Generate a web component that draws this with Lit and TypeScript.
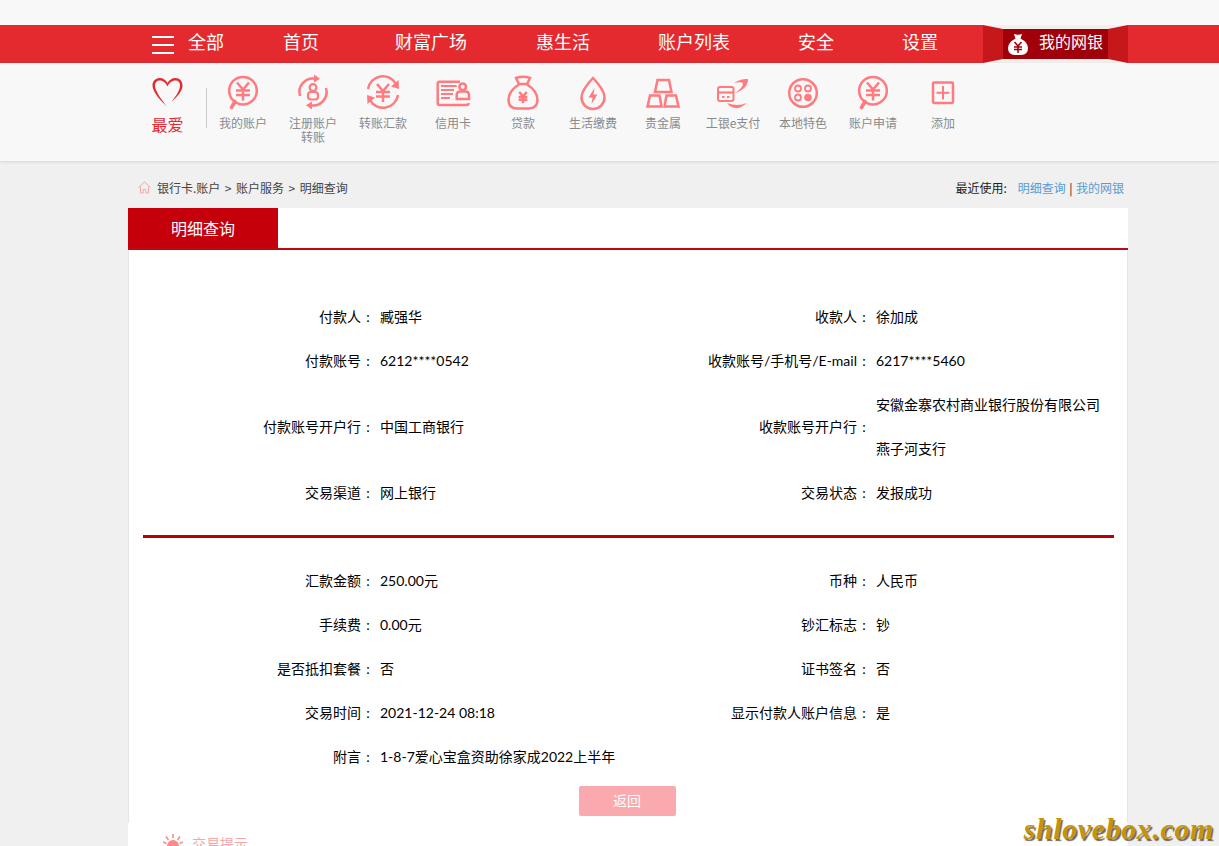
import { LitElement, html, css, svg } from "lit";
import { customElement } from "lit/decorators.js";

const yen = (cx: number, cy: number, s = 1) => svg`
  <path d="M${cx - 6 * s} ${cy - 8 * s}L${cx} ${cy - 1 * s}L${cx + 6 * s} ${cy - 8 * s}M${cx - 7 * s} ${cy}H${cx + 7 * s}M${cx - 7 * s} ${cy + 4.5 * s}H${cx + 7 * s}M${cx} ${cy - 1 * s}V${cy + 10 * s}" />`;

const bubble = svg`
  <circle cx="20" cy="18.700" r="13.800" />
  <path d="M12 29.500L8.500 35.500" stroke-width="3.600" stroke-linecap="round" />
  ${yen(20, 18.5)}`;

const icons: Record<string, unknown> = {
  account: bubble,
  register: svg`
    <path d="M7 24A13.500 13.500 0 0 1 22 6.700" /><path d="M21 2.500L27 6.800L21 10.500Z" fill="#ff7b7f" stroke="none" />
    <path d="M33 16A13.500 13.500 0 0 1 18 33.300" /><path d="M19 37.500L13 33.200L19 29.500Z" fill="#ff7b7f" stroke="none" />
    <circle cx="20" cy="15.500" r="3.400" stroke-width="2.200" />
    <rect x="15" y="20" width="10" height="7.500" rx="3" stroke-width="2.200" />`,
  transfer: svg`
    <path d="M5 17A15 15 0 0 1 33 12" /><path d="M35.500 8L36 17L28 14.500Z" fill="#ff7b7f" stroke="none" />
    <path d="M35 23A15 15 0 0 1 7 28" /><path d="M4.500 32L4 23L12 25.500Z" fill="#ff7b7f" stroke="none" />
    ${yen(20, 20)}`,
  card: svg`
    <path d="M27 9.700H6.700Q4.700 9.700 4.700 11.700V31Q4.700 33 6.700 33H34Q35.500 33 35.500 31" />
    <path d="M8 14H23.700M8 18H21M8 22H20M8 26H17" stroke-width="1.800" />
    <circle cx="29.700" cy="14.700" r="3.300" />
    <path d="M23.700 27V23Q23.700 19.500 27 19.500H32.500Q36 19.500 36 23V27Z" />`,
  loan: svg`
    <path d="M13 6Q20 3.500 27 6L24 12H16Z" />
    <path d="M16 12.500Q5.500 19 5.500 28Q5.500 36 14 36.500H26Q34.500 36 34.500 28Q34.500 19 24 12.500" />
    ${yen(20, 25, 0.62)}`,
  water: svg`
    <path d="M20 6Q8.500 18 8.500 25.500A11.500 11.500 0 0 0 31.500 25.500Q31.500 18 20 6Z" />
    <path d="M21.500 16L15.500 25.500H19.500L18.500 32L24.500 22.500H20.500Z" fill="#ff7b7f" stroke="none" />`,
  gold: svg`
    <path d="M14.500 8H26L28.500 20H12Z" />
    <path d="M7 23.500H16.500L18.500 34.500H4.500Z" />
    <path d="M23.500 23.500H33L35.500 34.500H21.500Z" />`,
  pay: svg`
    <rect x="5" y="15" width="15.500" height="14" rx="2" stroke-width="2" />
    <path d="M5 20.500H20.500" stroke-width="2.200" />
    <path d="M9 25H11.500M14 25H16.500" stroke-width="1.800" />
    <path d="M21 11Q28 6.500 35 7Q35 13 30 17Q26 20 22 21Q30 16 30 11Q27 9.500 21 11Z" fill="#ff7b7f" stroke="none" />
    <path d="M14 31Q25 35 33.500 31Q27 38 20 35.500Q16 34 14 31Z" fill="#ff7b7f" stroke="none" />`,
  local: svg`
    <circle cx="20" cy="21" r="13.800" />
    <circle cx="15" cy="16.500" r="3" stroke-width="1.800" />
    <circle cx="25" cy="16.500" r="3" stroke-width="1.800" />
    <circle cx="15" cy="25.500" r="3" stroke-width="1.800" />
    <circle cx="25" cy="25.500" r="3.800" fill="#ff7b7f" stroke="none" />`,
  apply: bubble,
  add: svg`
    <rect x="10" y="10.500" width="20" height="20.500" rx="1.200" />
    <path d="M20 14V27.500M13.500 20.700H26.500" stroke-width="2" />`,
};

const tools = [
  { icon: "account", label: "我的账户" },
  { icon: "register", label: "注册账户转账" },
  { icon: "transfer", label: "转账汇款" },
  { icon: "card", label: "信用卡" },
  { icon: "loan", label: "贷款" },
  { icon: "water", label: "生活缴费" },
  { icon: "gold", label: "贵金属" },
  { icon: "pay", label: "工银e支付" },
  { icon: "local", label: "本地特色" },
  { icon: "apply", label: "账户申请" },
  { icon: "add", label: "添加" },
];

const navs = [
  { t: "首页", gap: 59 },
  { t: "财富广场", gap: 76 },
  { t: "惠生活", gap: 69 },
  { t: "账户列表", gap: 68 },
  { t: "安全", gap: 68 },
  { t: "设置", gap: 68 },
];

const upper = [
  ["付款人", "臧强华", "收款人", "徐加成"],
  ["付款账号", "6212****0542", "收款账号/手机号/E-mail", "6217****5460"],
  ["付款账号开户行", "中国工商银行", "收款账号开户行", "安徽金寨农村商业银行股份有限公司|燕子河支行"],
  ["交易渠道", "网上银行", "交易状态", "发报成功"],
];
const lower = [
  ["汇款金额", "250.00元", "币种", "人民币"],
  ["手续费", "0.00元", "钞汇标志", "钞"],
  ["是否抵扣套餐", "否", "证书签名", "否"],
  ["交易时间", "2021-12-24 08:18", "显示付款人账户信息", "是"],
  ["附言", "1-8-7爱心宝盒资助徐家成2022上半年", "", ""],
];

@customElement("app-root")
export class AppRoot extends LitElement {
  static styles = css`
    :host {
      display: block;
      position: relative;
      height: 846px;
      overflow: hidden;
      background: #f0f0f0;
      font-family: "Noto Sans CJK SC", "Liberation Sans", sans-serif;
      color: #000;
    }
    .strip { height: 25px; background: #f8f8f8; }
    .nav { height: 38px; background: #e42a2f; }
    .wrap { width: 1000px; margin-left: 128px; }
    .nav .wrap { display: flex; align-items: center; height: 38px; color: #fff; font-size: 18px; }
    .burger { display: flex; flex-direction: column; justify-content: space-between; width: 22px; height: 18px; margin: 2px 14px 0 24px; }
    .burger i { display: block; height: 2px; background: #fff; }
    .navitem { white-space: nowrap; line-height: 38px; margin-top: -7px; }
    .mine { margin-left: auto; width: 145px; height: 38px; flex: none; background: #f2efed; display: flex; }
    .rib { width: 20px; height: 38px; flex: none; }
    .mine-mid { flex: 1; height: 30px; margin-top: 4px; background: #a0000a; display: flex; align-items: center; font-size: 16px; padding-left: 5px; gap: 11px; }
    .mine-mid svg { flex: none; }
    .mine-mid span { margin-bottom: 6px; }
    .tools { height: 98px; background: #f8f8f8; box-shadow: 0 1px 3px rgba(0, 0, 0, 0.12); position: relative; }
    .tools .wrap { display: flex; height: 98px; }
    .fav { width: 79px; flex: none; position: relative; padding-top: 14px; box-sizing: border-box; margin-right: 1px; }
    .fav-in { width: 79px; text-align: center; color: #e42a2f; font-size: 16px; line-height: 20px; }
    .fav-in svg { display: block; margin: 0 auto 7px; }
    .sep { position: absolute; right: 0; top: 25px; width: 1px; height: 40px; background: #ccc; }
    .tool { width: 70px; flex: none; text-align: center; font-size: 12px; line-height: 14px; color: #8a8a8a; padding-top: 9px; box-sizing: border-box; }
    .tool svg { display: block; margin: 0 auto 4px; fill: none; stroke: #ff7b7f; stroke-width: 2.5; }
    .tool span { display: block; width: 56px; margin: 0 auto; }
    .crumbs { height: 47px; display: flex; align-items: center; justify-content: space-between; font-size: 12px; color: #444; padding: 6px 4px 0 10px; box-sizing: border-box; }
    .crumbs .l { display: flex; align-items: center; gap: 6px; }
    .crumbs .sepc { margin: 0 4.500px; }
    .crumbs .r { color: #222; }
    .crumbs a { color: #5a9bd0; text-decoration: none; }
    .crumbs .lbl { margin-right: 11px; }
    .crumbs .bar { margin: 0 3.500px; }
    .tabbar { height: 42px; background: #fff; border-bottom: 2px solid #bd0a12; box-sizing: border-box; }
    .tab { width: 150px; height: 40px; background: #c6000b; color: #fff; font-size: 16px; line-height: 40px; text-align: center; }
    .card { background: #fff; border-left: 1px solid #e6e6e6; border-right: 1px solid #e6e6e6; height: 573px; box-sizing: border-box; padding: 45px 13px 0 14px; font-size: 14px; font-family: "Lato", "Noto Sans CJK SC", sans-serif; }
    .row { display: grid; grid-template-columns: 232px 264px 232px 1fr; line-height: 44px; align-items: center; }
    .row .k { display: flex; justify-content: flex-end; white-space: nowrap; }
    .row .c { width: 14px; text-align: center; }
    .row .v { padding-left: 5px; white-space: nowrap; }
    hr { border: 0; height: 3px; background: #b9000a; margin: 20px 0 21px; }
    .btn-row { display: flex; justify-content: center; padding: 7px 3px 0 0; }
    .btn { width: 97px; height: 30px; background: #faa9ae; color: #fff; font-size: 14px; border-radius: 2px; text-align: center; line-height: 30px; }
    .foot { background: #fff; height: 30px; display: flex; align-items: flex-start; gap: 9px; padding: 10px 0 0 35px; color: #f7a6a8; font-size: 14px; line-height: 20px; box-sizing: border-box; }
    .mark { position: absolute; right: 5px; bottom: 2px; font-family: "Liberation Serif", serif; font-style: italic; font-weight: 700; font-size: 30px; line-height: 30px; letter-spacing: 0.6px; color: #c6940c; text-shadow: 1.500px 1.500px 1px #666; }
  `;

  private rows(list: string[][]) {
    const key = (t: string) => html`<div class="k">${t}${t ? html`<span class="c">:</span>` : ""}</div>`;
    return list.map(
      (r) => html`<div class="row">
        ${key(r[0])}
        <div class="v">${r[1]}</div>
        ${key(r[2])}
        <div class="v">${r[3].split("|").map((p, i) => (i ? html`<br />${p}` : p))}</div>
      </div>`
    );
  }

  render() {
    return html`
      <div class="strip"></div>
      <div class="nav">
        <div class="wrap">
          <div class="burger"><i></i><i></i><i></i></div>
          <div class="navitem">全部</div>
          ${navs.map((n) => html`<div class="navitem" style="margin-left:${n.gap}px">${n.t}</div>`)}
          <div class="mine">
            <svg class="rib" viewBox="0 0 20 38"><path d="M0 0L20 4V34L0 38Z" fill="#c6171a" /></svg>
            <div class="mine-mid">
              <svg width="20" height="22" viewBox="0 0 20 22">
                <path d="M6 1Q10 2.500 14 1L12.500 5.500Q20 9.500 20 15Q20 22 13 22H7Q0 22 0 15Q0 9.500 7.500 5.500Z" fill="#fff" />
                <path d="M6.500 9L10 13L13.500 9M6 14H14M6 16.500H14M10 13V20" stroke="#a0000a" stroke-width="1.500" fill="none" />
              </svg>
              <span>我的网银</span>
            </div>
            <svg class="rib" viewBox="0 0 20 38"><path d="M20 0L0 4V34L20 38Z" fill="#c6171a" /></svg>
          </div>
        </div>
      </div>
      <div class="tools">
        <div class="wrap">
          <div class="fav">
            <div class="fav-in">
              <svg width="31" height="30" viewBox="0 0 31 30">
                <path d="M15 29.500C8 23 0.500 15 0.500 8.500C0.500 3 4.500 1 8 1C11 1 14 3 15.500 6C17 3 20 1 23.500 1C27.500 1 30.500 4 30.500 8.500C30.500 14 25 20 19.500 25C23 20 28 14 28 8.500C28 5 26 3.500 23.500 3.500C20 3.500 17 6 15.500 9.500C14 6 11 3.500 8 3.500C5 3.500 3 5.500 3 8.500C3 14 9 22 15 29.500Z" fill="#e42a2f" />
              </svg>
              最爱
            </div>
            <div class="sep"></div>
          </div>
          ${tools.map(
            (t) => html`<div class="tool">
              <svg width="40" height="40" viewBox="0 0 40 40">${icons[t.icon]}</svg>
              <span>${t.label}</span>
            </div>`
          )}
        </div>
      </div>
      <div class="wrap">
        <div class="crumbs">
          <div class="l">
            <svg width="13" height="13" viewBox="0 0 13 13" fill="none" stroke="#f9a5a5" stroke-width="1">
              <path d="M0.500 6.500L6.500 1L12.500 6.500M2.500 5.500V12H5.200V8.500H7.800V12H10.500V5.500" />
            </svg>
            <span>银行卡.账户<span class="sepc">&gt;</span>账户服务<span class="sepc">&gt;</span>明细查询</span>
          </div>
          <div class="r"><span class="lbl">最近使用:</span><a>明细查询</a><span class="bar">|</span><a>我的网银</a></div>
        </div>
        <div class="tabbar"><div class="tab">明细查询</div></div>
        <div class="card">
          ${this.rows(upper)}
          <hr />
          ${this.rows(lower)}
          <div class="btn-row"><div class="btn">返回</div></div>
        </div>
        <div class="foot">
          <svg width="20" height="20" viewBox="0 0 20 20" fill="#fb8a8a">
            <circle cx="10" cy="13" r="6" />
            <path d="M10 1V5M3 3.500L5.500 7M17 3.500L14.500 7M0 9L3.500 10.500M20 9L16.500 10.500" stroke="#fb8a8a" stroke-width="1.600" />
          </svg>
          <span>交易提示</span>
        </div>
      </div>
      <div class="mark">shlovebox.com</div>
    `;
  }
}
